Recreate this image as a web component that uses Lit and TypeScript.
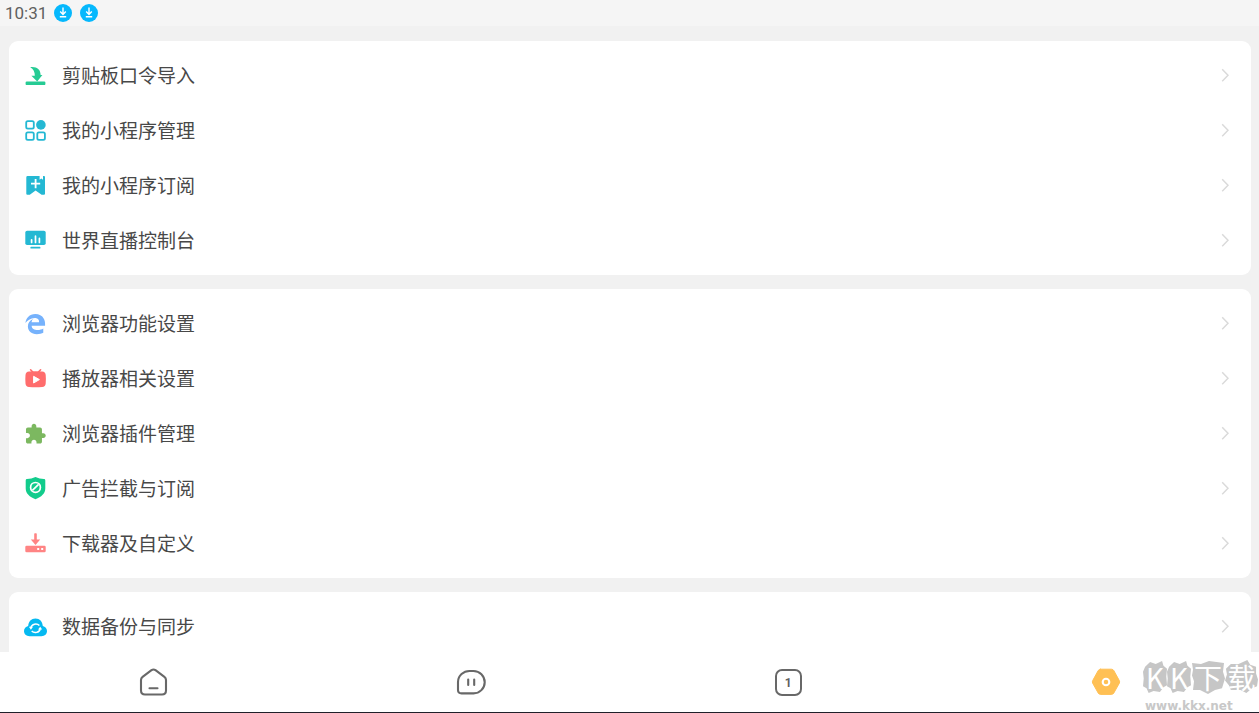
import { LitElement, html, css, svg, TemplateResult } from "lit";
import { customElement, property } from "lit/decorators.js";

interface Item {
  label: string;
  icon: TemplateResult;
}

const importIcon = svg`<g fill="#26cb94">
  <rect x="2.6" y="18.6" width="19.8" height="3.5" rx="1.2"/>
  <path d="M7.2 4.2C14 3.4 17.6 6.6 17.6 12H19.4L14.2 18.4L8.4 12.8H11.8C12 9 10.4 6 7.2 4.2Z"/></g>`;

const appsIcon = svg`<g fill="none" stroke="#24b8d3" stroke-width="1.8">
  <rect x="3.2" y="3.1" width="7.6" height="7.6" rx="1.6"/>
  <rect x="3.2" y="14.3" width="7.6" height="7.6" rx="1.6"/>
  <rect x="14.3" y="14.3" width="7.6" height="7.6" rx="1.6"/></g>
  <circle cx="17.9" cy="6.9" r="4.8" fill="#24b8d3"/>`;

const bookmarkIcon = svg`<path fill="#24b8d3" d="M4.6 3H16.6V6.8L18.3 5.6L20 6.8V3H21Q22 3 22 4V20.8Q22 21.8 21 21.8H18.6L12.6 17.6L6.8 21.8H4.4Q3.3 21.8 3.3 20.8V4.4Q3.3 3 4.6 3Z"/>
  <path d="M12.6 6V15.2M8 10.6H17.2" stroke="#fff" stroke-width="1.8"/>`;

const consoleIcon = svg`<rect x="2.3" y="2.8" width="20.4" height="14.2" rx="1.8" fill="#24b8d3"/>
  <rect x="7.4" y="18.7" width="10" height="1.8" rx=".6" fill="#24b8d3"/>
  <path d="M8.6 11.8V14.4M12.5 8.2V14.4M16.4 10.4V14.4" stroke="#fff" stroke-width="1.7" stroke-linecap="round"/>`;

const edgeIcon = svg`<path fill="#76b2fc" transform="translate(1.3 2.8) scale(.0427 .0405)" d="M486.286 243.671c0-44.032-7.754-84.465-28.801-122.405C416.498 47.879 343.912 8.001 258.893 8.001 118.962 7.724 40.617 113.214 26.057 227.679c42.429-61.312 117.073-121.376 220.375-124.966 0 0 109.666 0 99.419 104.957H169.997c6.369-37.386 18.554-58.986 34.339-78.915-75.048 34.893-121.85 96.096-120.742 188.315.83 71.448 50.124 144.836 120.743 171.976 83.357 31.843 192.776 7.2 240.132-21.321V363.307c-80.864 56.494-270.871 60.925-272.255-67.572h314.073v-52.064z"/>`;

const playerIcon = svg`<path d="M7.6 3.8L10 6.4M17.6 3.8L15.2 6.4" stroke="#ff6d6d" stroke-width="1.6" stroke-linecap="round"/>
  <path fill="#ff6d6d" d="M6 5.6Q12.6 4.9 19.2 5.6Q22.4 5.9 22.7 9Q23.1 13.2 22.7 17.4Q22.4 20.6 19.2 20.9Q12.6 21.5 6 20.9Q2.8 20.6 2.5 17.4Q2.1 13.2 2.5 9Q2.8 5.9 6 5.6Z"/>
  <path fill="#fff" stroke="#fff" stroke-linejoin="round" d="M10.6 10.3L16.4 13.6L10.6 17Z"/>`;

const puzzleIcon = svg`<path fill="#7cb860" transform="translate(1.1 1.9) scale(.94)" d="M20.5 11H19V7c0-1.1-.9-2-2-2h-4V3.5C13 2.12 11.88 1 10.5 1S8 2.12 8 3.5V5H4c-1.1 0-1.99.9-1.99 2v3.8H3.5c1.49 0 2.7 1.21 2.7 2.7s-1.21 2.7-2.7 2.7H2V20c0 1.1.9 2 2 2h3.8v-1.5c0-1.49 1.21-2.7 2.7-2.7 1.49 0 2.7 1.21 2.7 2.7V22H17c1.1 0 2-.9 2-2v-4h1.5c1.38 0 2.5-1.12 2.5-2.5S21.88 11 20.5 11z"/>`;

const shieldIcon = svg`<path fill="#12cc8c" d="M12.5 1Q16.5 3 21 3Q22.3 3 22.3 4.4V12.2C22.3 17.6 18.4 20.8 12.5 23.2C6.6 20.8 2.7 17.6 2.7 12.2V4.4Q2.7 3 4 3Q8.5 3 12.5 1Z"/>
  <circle cx="12.5" cy="11.4" r="4.9" fill="none" stroke="#fff" stroke-width="1.7"/>
  <path d="M9.4 14.4L15.6 8.4" stroke="#fff" stroke-width="1.7"/>`;

const downloadIcon = svg`<g fill="#ff8484"><rect x="11.2" y="2.2" width="2.6" height="8" rx=".8"/>
  <path d="M7.8 8.6H17.2L12.5 13.9Z"/>
  <path fill-rule="evenodd" d="M3.6 14.8H21.4Q22.7 14.8 22.7 16V20Q22.7 21.2 21.4 21.2H3.6Q2.3 21.2 2.3 20V16Q2.3 14.8 3.6 14.8ZM14.2 17V19H16.2V17ZM18.2 17V19H20.2V17Z"/></g>`;

const cloudIcon = svg`<path fill="#05b9f1" d="M6.6 22.2C3.2 22.2 1 19.9 1 17C1 14.4 2.8 12.4 5.2 11.9C5.4 7.5 8.3 4.4 12.5 4.4C16.7 4.4 19.6 7.5 19.8 11.9C22.2 12.4 24 14.4 24 17C24 19.9 21.8 22.2 18.4 22.2Z"/>
  <path fill="none" stroke="#fff" stroke-width="1.5" d="M7.9 13.6A4.9 4.4 0 0 1 16.4 11.6M17.2 15A4.9 4.4 0 0 1 8.7 17"/>
  <path fill="#fff" d="M5.9 12.8H10L7.9 15.8ZM19.2 15.6H15L17.2 12.8Z"/>`;

const groups: Item[][] = [
  [
    { label: "剪贴板口令导入", icon: importIcon },
    { label: "我的小程序管理", icon: appsIcon },
    { label: "我的小程序订阅", icon: bookmarkIcon },
    { label: "世界直播控制台", icon: consoleIcon },
  ],
  [
    { label: "浏览器功能设置", icon: edgeIcon },
    { label: "播放器相关设置", icon: playerIcon },
    { label: "浏览器插件管理", icon: puzzleIcon },
    { label: "广告拦截与订阅", icon: shieldIcon },
    { label: "下载器及自定义", icon: downloadIcon },
  ],
  [{ label: "数据备份与同步", icon: cloudIcon }],
];

@customElement("status-bar")
export class StatusBar extends LitElement {
  static styles = css`
    :host {
      display: flex;
      align-items: center;
      gap: 8px;
      flex: none;
      height: 26px;
      padding-left: 5px;
      background: #f5f5f5;
    }
    .time {
      width: 41px;
      font: 17px/26px Roboto, sans-serif;
      color: #606060;
    }
    .badge {
      display: block;
      width: 18px;
      height: 18px;
    }
  `;

  private badge() {
    return html`<svg class="badge" viewBox="0 0 18 18" aria-hidden="true">
      <circle cx="9" cy="9" r="9" fill="#05b8fd" />
      <path d="M9 3.6V10M6.2 7.6L9 10.4L11.8 7.6M5.8 12.8H12.2" fill="none" stroke="#fff" stroke-width="1.4" />
    </svg>`;
  }

  render() {
    return html`<span class="time">10:31</span>${this.badge()}${this.badge()}`;
  }
}

@customElement("settings-card")
export class SettingsCard extends LitElement {
  @property({ attribute: false }) items: Item[] = [];

  static styles = css`
    :host {
      display: flex;
      flex-direction: column;
      flex: none;
      padding: 7px 0;
      border-radius: 9px;
      background: #fff;
    }
    .row {
      display: flex;
      align-items: center;
      gap: 14px;
      height: 55px;
      padding: 0 22px 0 14px;
      border: 0;
      background: none;
      color: #484848;
      font: 19px/28px "Noto Sans CJK SC", sans-serif;
      text-align: left;
      cursor: pointer;
    }
    .icon {
      flex: none;
      width: 25px;
      height: 25px;
    }
    .label {
      flex: 1;
      padding-bottom: 2px;
    }
    .chevron {
      flex: none;
      width: 8px;
      height: 15px;
    }
  `;

  render() {
    return this.items.map(
      (item) => html`<button class="row" type="button">
        <svg class="icon" viewBox="0 0 25 25" aria-hidden="true">${item.icon}</svg>
        <span class="label">${item.label}</span>
        <svg class="chevron" viewBox="0 0 8 15" aria-hidden="true">
          <path d="M1.2 1.2L7 7.2L1.2 13.2" fill="none" stroke="#dadada" stroke-width="1.5" />
        </svg>
      </button>`
    );
  }
}

@customElement("bottom-nav")
export class BottomNav extends LitElement {
  static styles = css`
    :host {
      display: flex;
      align-items: center;
      justify-content: space-between;
      flex: none;
      height: 60px;
      padding: 0 138px;
      background: #fff;
      border-bottom: 1px solid #20202a;
    }
    .tab {
      display: grid;
      place-items: center;
      width: 30px;
      height: 30px;
      padding: 0;
      border: 0;
      background: none;
      cursor: pointer;
    }
    .glyph {
      display: block;
      width: 30px;
      height: 30px;
      fill: none;
      stroke: #686868;
      stroke-width: 2.1;
      stroke-linecap: round;
      stroke-linejoin: round;
    }
    .count {
      box-sizing: border-box;
      width: 27px;
      height: 27px;
      border: 2px solid #686868;
      border-radius: 7px;
      font: bold 12px/24px Roboto, sans-serif;
      color: #606060;
      text-align: center;
    }
    .hex {
      fill: #ffc054;
      stroke: #ffc054;
      stroke-width: 1;
    }
    .hole {
      stroke: #fff;
    }
  `;

  render() {
    return html`
      <button class="tab" type="button" aria-label="主页">
        <svg class="glyph" viewBox="0 0 30 30">
          <path d="M13.5 3.2Q15.5 1.8 17.5 3.2L26.4 9.8Q28 11 28 13V23.5Q28 27.5 24 27.5H7Q3 27.5 3 23.5V13Q3 11 4.6 9.8Z" />
          <path d="M11.5 21.2H19.5" />
        </svg>
      </button>
      <button class="tab" type="button" aria-label="小程序">
        <svg class="glyph" viewBox="0 0 30 30">
          <path d="M14 4H17.5A11 11 0 0 1 17.5 26.4H5.5Q2 26.4 2 23V15A11.5 11 0 0 1 14 4Z" />
          <path d="M12.2 12.5V18M18.2 12.5V18" />
        </svg>
      </button>
      <button class="tab" type="button" aria-label="窗口"><span class="count">1</span></button>
      <button class="tab" type="button" aria-label="设置">
        <svg class="glyph" viewBox="0 0 30 30">
          <path class="hex" d="M9.6 2.2H20.4Q22 2.2 22.8 3.6L28.3 13.6Q29 14.9 28.3 16.2L22.8 26Q22 27.4 20.4 27.4H9.6Q8 27.4 7.2 26L1.7 16.2Q1 14.9 1.7 13.6L7.2 3.6Q8 2.2 9.6 2.2Z" />
          <circle class="hole" cx="15" cy="15" r="3.3" />
        </svg>
      </button>
    `;
  }
}

@customElement("site-mark")
export class SiteMark extends LitElement {
  static styles = css`
    :host {
      display: block;
      width: 115px;
    }
    .name {
      display: grid;
      grid-template-columns: 24px 24px 34px 33px;
      height: 34px;
    }
    .tile {
      position: relative;
      display: grid;
      place-items: center;
    }
    .blob {
      position: absolute;
      inset: 0;
      width: 100%;
      height: 100%;
      fill: #c6c6c6;
    }
    .char {
      position: relative;
      color: #fff;
      font: 28px/32px "Noto Sans CJK SC", sans-serif;
    }
    .site {
      display: block;
      margin: 6px 0 0 2px;
      font: bold 12px/13px "DejaVu Sans", sans-serif;
      color: #c8c8c8;
    }
  `;

  private tile(char: string, shape: string) {
    return html`<span class="tile">
      <svg class="blob" viewBox="0 0 34 35" preserveAspectRatio="none" aria-hidden="true"><path d=${shape} /></svg>
      <span class="char">${char}</span>
    </span>`;
  }

  render() {
    const a = "M3 7L10 2L18 4L27 1L29 6L34 9L33 17L34 26L29 28L24 33L15 32L8 34L5 29L0 27L1 19L0 12Z";
    const b = "M1 3L10 4L18 1L33 3L32 12L34 19L31 29L24 31L17 35L9 31L2 31L3 22L1 16L2 10Z";
    const c = "M6 4L14 4L23 0L26 5L32 7L32 14L34 20L33 27L28 29L22 34L16 31L6 31L4 26L0 21L2 15L1 9Z";
    return html`
      <div class="name">${this.tile("K", a)}${this.tile("K", a)}${this.tile("下", b)}${this.tile("载", c)}</div>
      <span class="site">www.kkx.net</span>
    `;
  }
}

@customElement("app-root")
export class AppRoot extends LitElement {
  static styles = css`
    :host {
      position: relative;
      display: flex;
      flex-direction: column;
      height: 100vh;
      overflow: hidden;
      background: #f1f1f1;
    }
    .list {
      display: flex;
      flex-direction: column;
      gap: 14px;
      flex: 1;
      min-height: 0;
      padding: 15px 8px 0 9px;
      overflow-y: auto;
      scrollbar-width: none;
    }
    .mark {
      position: absolute;
      right: 1px;
      bottom: 0;
      pointer-events: none;
    }
  `;

  render() {
    return html`
      <status-bar></status-bar>
      <main class="list">${groups.map((items) => html`<settings-card .items=${items}></settings-card>`)}</main>
      <bottom-nav></bottom-nav>
      <site-mark class="mark"></site-mark>
    `;
  }
}
